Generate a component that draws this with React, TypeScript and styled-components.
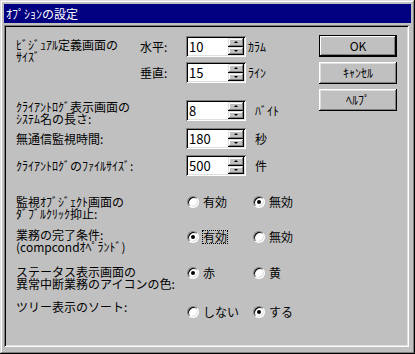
import styled, { createGlobalStyle } from 'styled-components';

const GlobalStyle = createGlobalStyle`
  html, body {
    margin: 0;
    padding: 0;
    background: #c0c0c0;
  }
  body {
    font-family: "Noto Sans CJK JP", "Noto Sans", sans-serif;
    font-size: 12px;
    color: #000;
  }
`;

const Window = styled.div`
  width: 415px;
  height: 354px;
  box-sizing: border-box;
  padding: 4px 6px 7px 4px;
  background: #c0c0c0;
  box-shadow: inset -1px -1px #000, inset 1px 1px #dfdfdf, inset -2px -2px #808080,
    inset 2px 2px #fff;
  display: flex;
  flex-direction: column;
`;

const TitleBar = styled.div`
  height: 19px;
  margin-right: -2px;
  padding-left: 2px;
  background: #000080;
  color: #fff;
  display: flex;
  align-items: center;
  line-height: 12px;
`;

const Client = styled.div`
  flex: 1;
  margin-top: 2px;
  padding: 11px 12px 0 12px;
  box-shadow: inset 1px 1px #808080, inset -1px -1px #fff, inset 2px 2px #000,
    inset -2px -2px #dfdfdf;
  display: flex;
  justify-content: space-between;
`;

const Form = styled.div`
  display: flex;
  flex-direction: column;
`;

const SizeGroup = styled.div`
  display: flex;
`;

const Label = styled.div<{ $width: number; $pad?: number; $top?: boolean }>`
  width: ${p => p.$width}px;
  padding-top: ${p => p.$pad ?? 0}px;
  line-height: 12px;
  white-space: nowrap;
  flex-shrink: 0;
  align-self: ${p => (p.$top ? 'flex-start' : 'center')};
`;

const FieldStack = styled.div`
  display: flex;
  flex-direction: column;
  gap: 5px;
`;

const FieldRow = styled.div<{ $top?: number }>`
  display: flex;
  align-items: center;
  height: 21px;
  margin-top: ${p => p.$top ?? 0}px;
`;

const SpinBox = styled.div`
  width: 60px;
  height: 21px;
  box-sizing: border-box;
  padding: 2px;
  background: #fff;
  box-shadow: inset 1px 1px #808080, inset -1px -1px #fff, inset 2px 2px #000,
    inset -2px -2px #dfdfdf;
  display: flex;
`;

const SpinValue = styled.span`
  flex: 1;
  padding-left: 1px;
  font-size: 13px;
  line-height: 17px;
`;

const SpinButtons = styled.div`
  width: 16px;
  display: flex;
  flex-direction: column;
`;

const SpinButton = styled.div`
  flex: 1;
  background: #c0c0c0;
  box-shadow: inset -1px -1px #000, inset 1px 1px #dfdfdf, inset -2px -2px #808080,
    inset 2px 2px #fff;
  display: flex;
  align-items: center;
  justify-content: center;
`;

const Arrow = styled.span<{ $dir: 'up' | 'down' }>`
  width: 0;
  height: 0;
  border-left: 2px solid transparent;
  border-right: 2px solid transparent;
  ${p => (p.$dir === 'up' ? 'border-bottom: 2px solid #000;' : 'border-top: 2px solid #000;')}
`;

const Unit = styled.span<{ $gap: number }>`
  margin-left: ${p => p.$gap}px;
  line-height: 12px;
`;

const RadioRow = styled.div<{ $top: number }>`
  display: flex;
  align-items: flex-start;
  margin-top: ${p => p.$top}px;
`;

const Options = styled.div<{ $offset: number }>`
  display: flex;
  align-items: center;
  height: 12px;
  margin-top: ${p => p.$offset}px;
  margin-left: 1px;
`;

const Option = styled.div`
  width: 66px;
  display: flex;
  align-items: center;
  gap: 4px;
  line-height: 12px;
`;

const RadioDot = styled.span<{ $checked?: boolean }>`
  position: relative;
  width: 12px;
  height: 12px;
  box-sizing: border-box;
  border-radius: 50%;
  background: #fff;
  border: 1px solid;
  border-color: #808080 #fff #fff #808080;
  box-shadow: inset 1px 1px #000, inset -1px -1px #dfdfdf;

  &::after {
    content: '';
    display: ${p => (p.$checked ? 'block' : 'none')};
    position: absolute;
    left: 3px;
    top: 3px;
    width: 4px;
    height: 4px;
    border-radius: 50%;
    background: #000;
  }
`;

const Focus = styled.span`
  outline: 1px dotted #000;
  outline-offset: 0;
`;

const ButtonColumn = styled.div`
  width: 79px;
  margin-top: -1px;
  display: flex;
  flex-direction: column;
  gap: 5px;
`;

const Button = styled.div<{ $default?: boolean }>`
  height: 22px;
  box-sizing: border-box;
  display: flex;
  align-items: center;
  justify-content: center;
  line-height: 12px;
  background: #c0c0c0;
  box-shadow: ${p =>
    p.$default
      ? 'inset 1px 1px #000, inset -1px -1px #000, inset -2px -2px #000, inset 2px 2px #fff, inset -3px -3px #808080'
      : 'inset -1px -1px #000, inset 1px 1px #fff, inset -2px -2px #808080, inset 2px 2px #dfdfdf'};
`;

function Spin({ value }: { value: string }) {
  return (
    <SpinBox>
      <SpinValue>{value}</SpinValue>
      <SpinButtons>
        <SpinButton>
          <Arrow $dir="up" />
        </SpinButton>
        <SpinButton>
          <Arrow $dir="down" />
        </SpinButton>
      </SpinButtons>
    </SpinBox>
  );
}

type Choice = { label: string; checked?: boolean; focused?: boolean };

function Radios({ choices, offset }: { choices: Choice[]; offset: number }) {
  return (
    <Options $offset={offset}>
      {choices.map(c => (
        <Option key={c.label}>
          <RadioDot $checked={c.checked} />
          {c.focused ? <Focus>{c.label}</Focus> : <span>{c.label}</span>}
        </Option>
      ))}
    </Options>
  );
}

export default function App() {
  return (
    <>
      <GlobalStyle />
      <Window>
        <TitleBar>ｵﾌﾟｼｮﾝの設定</TitleBar>
        <Client>
          <Form>
            <SizeGroup>
              <Label $width={124} $pad={3} $top>
                ﾋﾞｼﾞｭｱﾙ定義画面の
                <br />
                ｻｲｽﾞ
              </Label>
              <FieldStack>
                <FieldRow>
                  <Label $width={46}>水平:</Label>
                  <Spin value="10" />
                  <Unit $gap={2}>ｶﾗﾑ</Unit>
                </FieldRow>
                <FieldRow>
                  <Label $width={46}>垂直:</Label>
                  <Spin value="15" />
                  <Unit $gap={2}>ﾗｲﾝ</Unit>
                </FieldRow>
              </FieldStack>
            </SizeGroup>

            <FieldRow $top={17}>
              <Label $width={170} $pad={1} $top>
                ｸﾗｲｱﾝﾄﾛｸﾞ表示画面の
                <br />
                ｼｽﾃﾑ名の長さ:
              </Label>
              <Spin value="8" />
              <Unit $gap={9}>ﾊﾞｲﾄ</Unit>
            </FieldRow>
            <FieldRow $top={7}>
              <Label $width={170}>無通信監視時間:</Label>
              <Spin value="180" />
              <Unit $gap={9}>秒</Unit>
            </FieldRow>
            <FieldRow $top={6}>
              <Label $width={170}>ｸﾗｲｱﾝﾄﾛｸﾞのﾌｧｲﾙｻｲｽﾞ:</Label>
              <Spin value="500" />
              <Unit $gap={9}>件</Unit>
            </FieldRow>

            <RadioRow $top={20}>
              <Label $width={170} $top>
                監視ｵﾌﾞｼﾞｪｸﾄ画面の
                <br />
                ﾀﾞﾌﾞﾙｸﾘｯｸ抑止:
              </Label>
              <Radios offset={0} choices={[{ label: '有効' }, { label: '無効', checked: true }]} />
            </RadioRow>
            <RadioRow $top={9}>
              <Label $width={170} $top>
                業務の完了条件:
                <br />
                (compcondｵﾍﾟﾗﾝﾄﾞ)
              </Label>
              <Radios
                offset={2}
                choices={[{ label: '有効', checked: true, focused: true }, { label: '無効' }]}
              />
            </RadioRow>
            <RadioRow $top={13}>
              <Label $width={170} $top>
                ステータス表示画面の
                <br />
                異常中断業務のアイコンの色:
              </Label>
              <Radios offset={1} choices={[{ label: '赤', checked: true }, { label: '黄' }]} />
            </RadioRow>
            <RadioRow $top={11}>
              <Label $width={170} $top>
                ツリー表示のソート:
              </Label>
              <Radios offset={5} choices={[{ label: 'しない' }, { label: 'する', checked: true }]} />
            </RadioRow>
          </Form>

          <ButtonColumn>
            <Button $default>OK</Button>
            <Button>ｷｬﾝｾﾙ</Button>
            <Button>ﾍﾙﾌﾟ</Button>
          </ButtonColumn>
        </Client>
      </Window>
    </>
  );
}
